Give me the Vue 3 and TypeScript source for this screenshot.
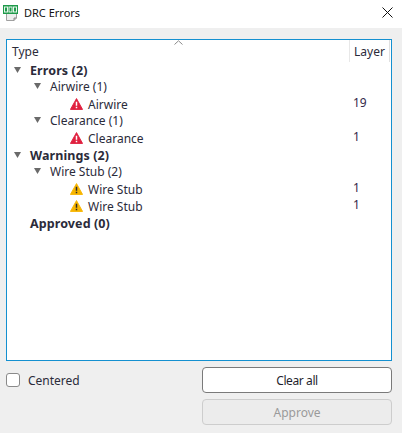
<template>
  <div class="dialog">
    <div class="titlebar">
      <svg class="app-icon" width="15" height="16" viewBox="0 0 15 16">
        <path d="M3.500 8h10v5l-2.500 2.500H3.500z" fill="#ededed" stroke="#a0a0a0" />
        <path d="M11 15.500v-2.500h2.500" fill="#bdbdbd" stroke="#8a8a8a" />
        <rect x="0" y="0" width="15" height="9" fill="#1f9a4a" />
        <rect x="1.500" y="2" width="3" height="5" fill="none" stroke="#e8f6ec" stroke-width="1" />
        <rect x="6" y="2" width="3" height="5" fill="none" stroke="#e8f6ec" stroke-width="1" />
        <rect x="10.500" y="2" width="3" height="5" fill="none" stroke="#e8f6ec" stroke-width="1" />
      </svg>
      <span class="title">DRC Errors</span>
      <svg class="close" width="11" height="11" viewBox="0 0 11 11">
        <path d="M0.500 0.500l10 10M10.500 0.500l-10 10" stroke="#111" stroke-width="1" fill="none" />
      </svg>
    </div>

    <div class="body">
      <div class="panel">
        <div class="head">
          <div class="head-type">Type</div>
          <div class="head-layer">Layer</div>
          <svg class="sort" width="9" height="5" viewBox="0 0 9 5">
            <path d="M0.500 4.500L4.500 0.800l4 3.700" stroke="#8a8a8a" fill="none" />
          </svg>
        </div>
        <div class="tree">
          <div v-for="row in rows" :key="row.id" class="row" :class="'level-' + row.level">
            <div class="cell-type">
              <svg v-if="row.open" class="arrow" width="7" height="6" viewBox="0 0 7 6">
                <path d="M0 0h7L3.500 6z" fill="#6a6a6a" />
              </svg>
              <svg v-if="row.icon" class="marker" width="13" height="12" viewBox="0 0 14 13">
                <path
                  d="M7 0.600L13.600 12.400H0.400z"
                  :fill="row.icon === 'error' ? '#e0203f' : '#f7b500'"
                  :stroke="row.icon === 'error' ? '#e0203f' : '#f7b500'"
                  stroke-linejoin="round"
                />
                <path d="M6.200 4h1.600v4.400H6.200zM6.200 9.600h1.600v1.600H6.200z" :fill="row.icon === 'error' ? '#fff' : '#2a2a2a'" />
              </svg>
              <span :class="{ bold: row.level === 0 }">{{ row.label }}</span>
            </div>
            <div class="cell-layer">{{ row.layer }}</div>
          </div>
        </div>
      </div>

      <div class="footer">
        <label class="check">
          <span class="box"></span>
          <span>Centered</span>
        </label>
        <div class="buttons">
          <button class="btn clear">Clear all</button>
          <button class="btn disabled" disabled>Approve</button>
        </div>
      </div>
    </div>
  </div>
</template>

<script setup lang="ts">
interface Row {
  id: number
  level: number
  label: string
  open?: boolean
  icon?: 'error' | 'warning'
  layer?: string
}

const rows: Row[] = [
  { id: 1, level: 0, label: 'Errors (2)', open: true },
  { id: 2, level: 1, label: 'Airwire (1)', open: true },
  { id: 3, level: 2, label: 'Airwire', icon: 'error', layer: '19' },
  { id: 4, level: 1, label: 'Clearance (1)', open: true },
  { id: 5, level: 2, label: 'Clearance', icon: 'error', layer: '1' },
  { id: 6, level: 0, label: 'Warnings (2)', open: true },
  { id: 7, level: 1, label: 'Wire Stub (2)', open: true },
  { id: 8, level: 2, label: 'Wire Stub', icon: 'warning', layer: '1' },
  { id: 9, level: 2, label: 'Wire Stub', icon: 'warning', layer: '1' },
  { id: 10, level: 0, label: 'Approved (0)' },
]
</script>

<style>
html,
body {
  margin: 0;
  background: #efefef;
}
</style>

<style scoped>
.dialog {
  width: 402px;
  height: 433px;
  display: flex;
  flex-direction: column;
  font-family: "Noto Sans", "Open Sans", sans-serif;
  font-size: 12px;
  color: #2b2b3a;
  overflow: hidden;
}

.titlebar {
  height: 28px;
  background: #fff;
  display: flex;
  align-items: flex-start;
  padding: 5px 9px 0 3px;
  box-sizing: border-box;
  flex-shrink: 0;
}

.app-icon {
  margin-right: 6px;
}

.title {
  flex: 1;
  color: #111;
  font-size: 11px;
  line-height: 16px;
}

.close {
  margin-top: 2px;
}

.body {
  flex: 1;
  display: flex;
  flex-direction: column;
  padding: 11px 10px 8px 6px;
  background: #efefef;
}

.panel {
  height: 322px;
  box-sizing: border-box;
  background: #fff;
  border: 1px solid #1490d0;
  position: relative;
}

.head {
  display: flex;
  height: 22px;
  line-height: 23px;
}

.head-type {
  flex: 1;
  padding-left: 5px;
}

.head-layer {
  width: 41px;
  box-sizing: border-box;
  padding-left: 4px;
  border-left: 1px solid #e8e8e8;
  border-right: 1px solid #e0e0e0;
  margin-right: 1px;
}

.sort {
  position: absolute;
  left: 167px;
  top: 0;
}

.row {
  display: flex;
  height: 17px;
  line-height: 17px;
}

.cell-type {
  flex: 1;
  display: flex;
  align-items: center;
  position: relative;
}

.cell-layer {
  width: 38px;
  line-height: 13px;
  color: #33284a;
}

.level-0 .cell-type {
  padding-left: 23px;
}

.level-1 .cell-type {
  padding-left: 43px;
  padding-bottom: 3px;
  box-sizing: border-box;
  height: 17px;
}

.level-2 .cell-type {
  padding-left: 81px;
}

.arrow {
  position: absolute;
  top: 5px;
}

.level-0 .arrow {
  left: 7px;
}

.level-1 .arrow {
  left: 27px;
  top: 4px;
}

.marker {
  position: absolute;
  left: 63px;
  top: 2px;
}

.bold {
  font-weight: 700;
  font-size: 12.5px;
  letter-spacing: 0.1px;
}

.footer {
  display: flex;
  justify-content: space-between;
  margin-top: 6px;
}

.check {
  display: flex;
  align-items: center;
  height: 26px;
  gap: 8px;
}

.box {
  width: 14px;
  height: 14px;
  box-sizing: border-box;
  background: #fff;
  border: 1px solid #8a8a8a;
  border-radius: 3px;
}

.buttons {
  display: flex;
  flex-direction: column;
  gap: 6px;
  width: 190px;
}

.btn {
  height: 26px;
  box-sizing: border-box;
  background: #fff;
  border: 1px solid #7a7a7a;
  border-radius: 4px;
  font: inherit;
  color: #1f1f2e;
  padding: 0;
}

.btn.clear {
  letter-spacing: -0.4px;
}

.btn.disabled {
  background: #ececec;
  border-color: #cdcdcd;
  color: #9a9a9a;
}
</style>
